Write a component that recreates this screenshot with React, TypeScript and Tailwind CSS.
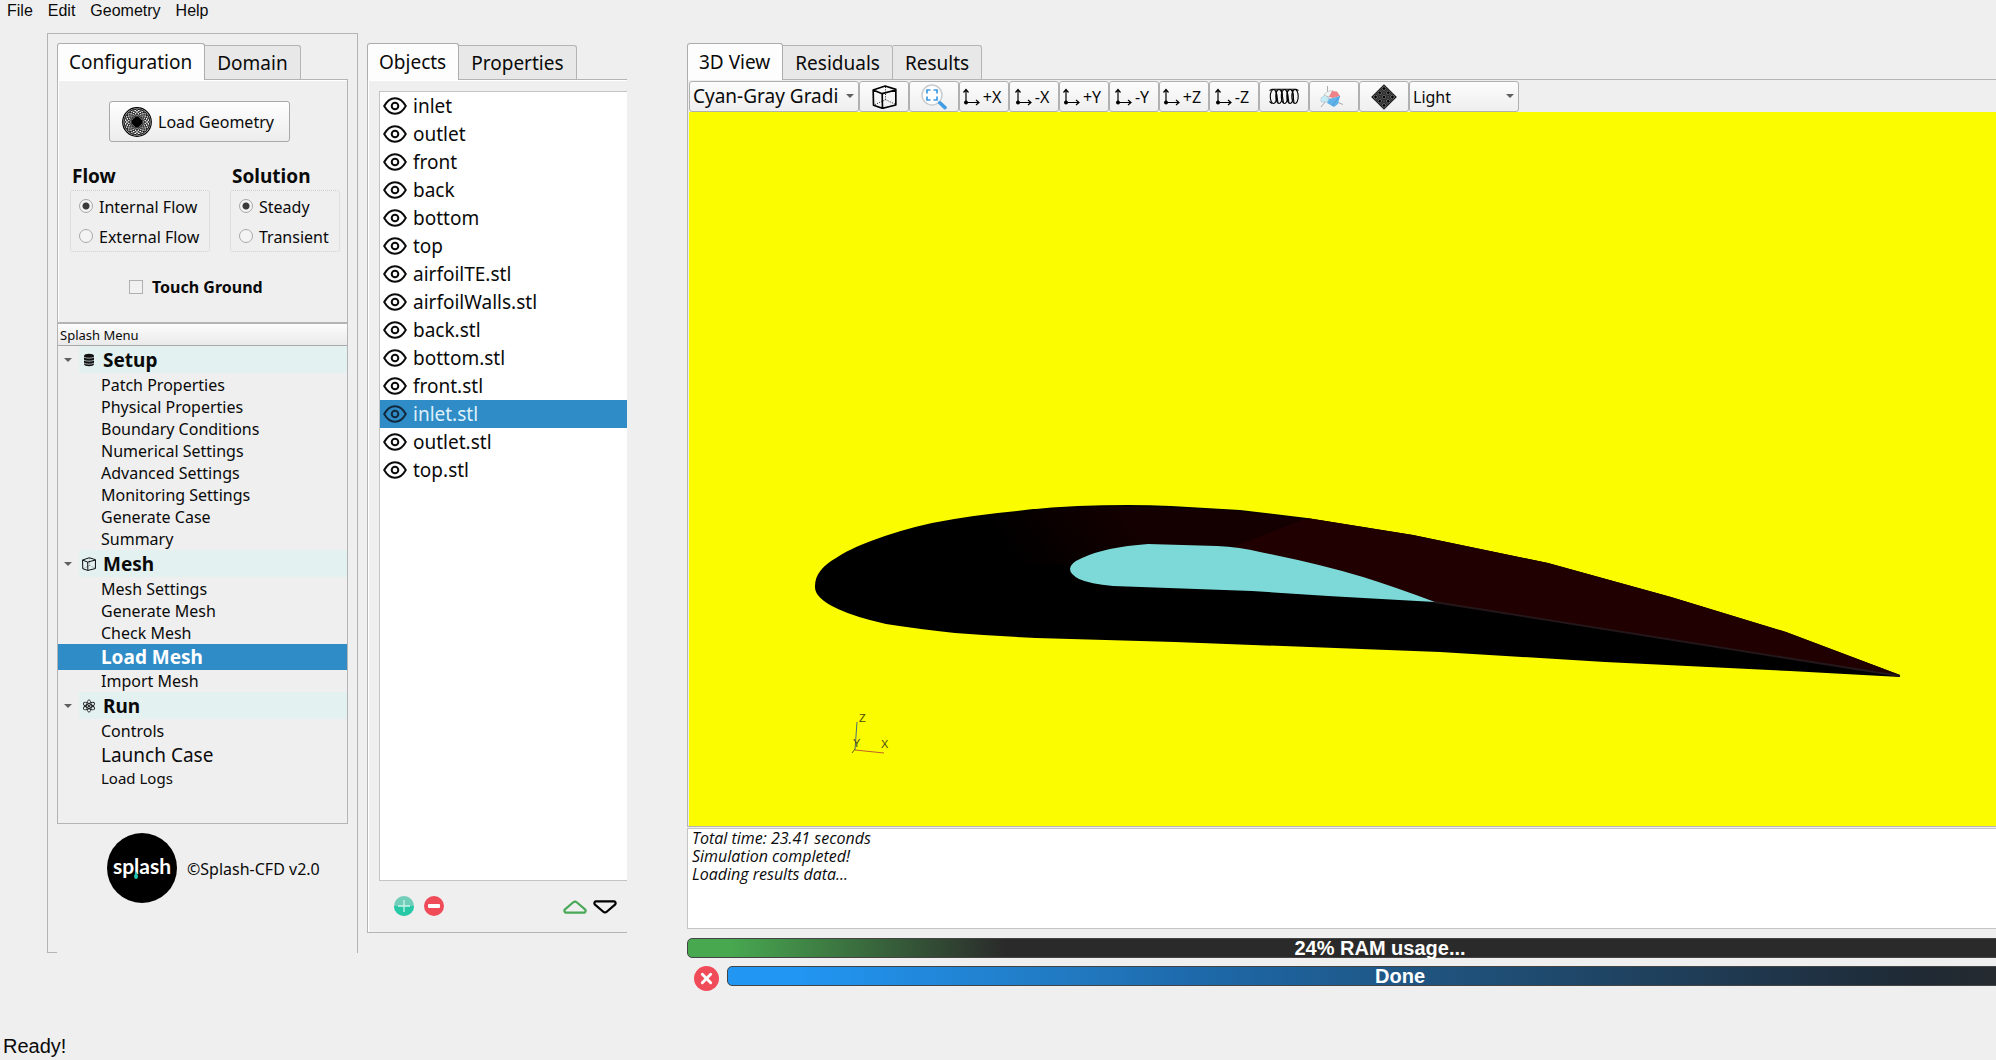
import React, { useState } from "react";

const OBJECTS = [
  "inlet", "outlet", "front", "back", "bottom", "top", "airfoilTE.stl", "airfoilWalls.stl",
  "back.stl", "bottom.stl", "front.stl", "inlet.stl", "outlet.stl", "top.stl",
];

const VIEWS = ["+X", "-X", "+Y", "-Y", "+Z", "-Z"];

function EyeIcon() {
  return (
    <svg viewBox="0 0 24 18" className="h-[18px] w-6 shrink-0" fill="none" stroke="currentColor" strokeWidth="2">
      <path d="M1.2 9C4 4 7.6 1.2 12 1.2S20 4 22.8 9C20 14 16.400 16.800 12 16.800S4 14 1.200 9Z" strokeLinejoin="round" />
      <circle cx="12" cy="9" r="3.300" />
    </svg>
  );
}

function CubeIcon({ className }: { className: string }) {
  return (
    <svg viewBox="0 0 74 72" className={className} fill="none" stroke="#000" strokeLinejoin="round">
      <path d="M3 15L39 3L71 13V60L31 70L4 61ZM3 15L30 26L71 15M30 26L31 70" strokeWidth="5" />
      <path d="M40 6V44L6 60M40 44L70 58" strokeWidth="2.500" strokeDasharray="3 4" />
    </svg>
  );
}

function GeometryIcon() {
  const turns = Array.from({ length: 20 }, (_, i) => i * 18);
  return (
    <svg viewBox="0 0 30 30" className="size-[30px] shrink-0" fill="none" stroke="#000">
      <circle cx="15" cy="15" r="14.300" fill="#fff" strokeWidth="1.200" />
      {turns.map((a) => (
        <ellipse key={a} cx="15" cy="8.300" rx="5" ry="6.500" strokeWidth="0.750" transform={`rotate(${a} 15 15)`} />
      ))}
      <circle cx="15" cy="15" r="4.500" fill="#000" />
    </svg>
  );
}

function DatabaseIcon() {
  return (
    <svg viewBox="0 0 12 14" className="h-3.5 w-3">
      <path d="M1 3C1 0 11 0 11 3V11C11 14 1 14 1 11Z" fill="#111" />
      <path d="M1 4.200C4 5.500 8 5.500 11 4.200M1 7.200C4 8.500 8 8.500 11 7.200M1 10.200C4 11.500 8 11.500 11 10.200" fill="none" stroke="#c8d4d4" strokeWidth="0.800" />
    </svg>
  );
}

function AtomIcon() {
  return (
    <svg viewBox="0 0 14 14" className="size-3.5" fill="none" stroke="#222" strokeWidth="0.900">
      {[0, 60, 120].map((a) => (
        <ellipse key={a} cx="7" cy="7" rx="2.300" ry="6.200" transform={`rotate(${a} 7 7)`} />
      ))}
      <circle cx="7" cy="7" r="0.900" fill="#222" />
    </svg>
  );
}

function AxisIcon() {
  return (
    <svg viewBox="0 0 17 18" className="h-[18px] w-[17px] shrink-0" fill="none" stroke="#000" strokeWidth="1.200">
      <path d="M3 14.500V1.500M0.500 4.500L3 1.500L5.500 4.500M3 14.500H16M13 12L16 14.500L13 17" />
      <circle cx="3" cy="14.500" r="2" fill="#000" stroke="none" />
    </svg>
  );
}

function ZoomFitIcon() {
  return (
    <svg viewBox="0 0 26 26" className="size-[26px]" fill="none">
      <circle cx="11" cy="11" r="10" fill="#fdfdfd" stroke="#c9cdd0" strokeWidth="1.500" />
      <path d="M6 9.500V6H9.500M12.500 6H16V9.500M16 12.500V16H12.500M9.500 16H6V12.500" stroke="#3d9be6" strokeWidth="1.700" />
      <path d="M18.800 18.800L24 23.600" stroke="#429de3" strokeWidth="3.600" strokeLinecap="round" />
    </svg>
  );
}

function CoilIcon() {
  return (
    <svg viewBox="0 0 30 17" className="h-[17px] w-[30px]" fill="none" stroke="#000" strokeWidth="1.100">
      {[4.5, 10, 15.5, 21, 26].map((x) => (
        <ellipse key={x} cx={x} cy="8.500" rx="3.200" ry="7" />
      ))}
      <path d="M0.500 2.500L3 1.300H27L29.500 2.500M0.500 13.500L3 15.500M7 2L9 15M12.500 2L14.500 15M18 2L20 15M23.500 2L25 15" />
    </svg>
  );
}

function ClipPlaneIcon() {
  return (
    <svg viewBox="0 0 24 22" className="h-[22px] w-6">
      <path d="M7.500 0V13L1 21M7.500 12L23 18.500" stroke="#999" strokeWidth="0.800" fill="none" />
      <path d="M1 12L5 9L9 12L7 16L1 16Z" fill="#c4ecf5" stroke="#9ab" strokeWidth="0.400" />
      <path d="M4 9L7 5.500L13 4.500L9 11Z" fill="#f1f4f5" stroke="#aaa" strokeWidth="0.500" />
      <path d="M12 5L17 5.500L20 10L13 12L9 11Z" fill="#ee8289" />
      <path d="M9 13L13 12L20 10L18 18L14 21L7 17Z" fill="#62b2ea" />
      <path d="M20 10L12 20" stroke="#3a8fd0" strokeWidth="0.600" />
    </svg>
  );
}

function MeshIcon() {
  const cells: React.ReactElement[] = [];
  for (let i = 0; i < 3; i++) for (let j = 0; j < 3; j++)
    cells.push(<circle key={`${i}${j}`} cx={6.5 + i * 5.5} cy={6.5 + j * 5.5} r="1.700" fill="#000" stroke="#8a8a8a" strokeWidth="0.700" />);
  return (
    <svg viewBox="0 0 24 24" className="size-[26px]">
      <g transform="rotate(45 12 12)">
        <rect x="3.600" y="3.600" width="16.800" height="16.800" fill="#1c1c1c" />
        <path d="M9.200 4V20M14.800 4V20M4 9.200H20M4 14.800H20" stroke="#777" strokeWidth="0.500" />
        {cells}
      </g>
    </svg>
  );
}

function Caret({ className = "" }: { className?: string }) {
  return (
    <svg viewBox="0 0 8 4" className={`h-1 w-2 ${className}`}>
      <path d="M0 0H8L4 4Z" fill="#5f6062" />
    </svg>
  );
}

function Tabs({ names }: { names: string[] }) {
  return (
    <div role="tablist" className="relative z-10 flex h-9 items-end text-[19px] leading-7">
      {names.map((n, i) =>
        i === 0 ? (
          <button key={n} role="tab" aria-selected="true" className="-mb-px h-[37px] rounded-t-[3px] border border-b-0 border-[#adadad] bg-[#fdfdfd] pr-3 pl-[11px] whitespace-nowrap">
            {n}
          </button>
        ) : (
          <button key={n} role="tab" aria-selected="false" className="h-[34px] rounded-tr-[3px] border border-b-0 border-l-0 border-[#b4b4b4] bg-[#e8e8e8] px-3 whitespace-nowrap">
            {n}
          </button>
        ),
      )}
    </div>
  );
}

function Radio({ name, label, on }: { name: string; label: string; on?: boolean }) {
  return (
    <label className="flex h-[30px] items-center gap-1.5 text-base leading-5">
      <input
        type="radio"
        name={name}
        defaultChecked={on}
        className="size-3.5 shrink-0 appearance-none rounded-full border border-[#a8a8a8] bg-[#f4f4f4] checked:bg-[radial-gradient(circle,#3a3a3a_3px,#f4f4f4_4px)]"
      />
      <span className="pt-0.5 whitespace-nowrap">{label}</span>
    </label>
  );
}

function Branch({ icon, title }: { icon: React.ReactNode; title: string }) {
  return (
    <div className="flex h-7 items-start">
      <Caret className="mt-3 ml-1.5 shrink-0" />
      <button className="ml-[7px] flex h-[27px] flex-1 items-center gap-[7px] bg-[#e3f1f1] pl-[3px] text-[19px] leading-[26px] font-bold">
        <span className="flex w-3.5 justify-center">{icon}</span>
        {title}
      </button>
    </div>
  );
}

function Leaf({ children, className = "h-[22px] text-base" }: { children: string; className?: string }) {
  return <button className={`flex w-full items-center pl-[43px] leading-5 ${className}`}>{children}</button>;
}

const toolButton =
  "flex h-[31px] w-[50px] shrink-0 items-center justify-center rounded-[3px] border border-[#b0b0b0] bg-linear-to-b from-[#fcfcfc] to-[#efefef] text-base";

function Combo({ label, value, className }: { label: string; value: string; className: string }) {
  return (
    <div className={`relative h-[31px] shrink-0 ${className}`}>
      <select aria-label={label} className="h-full w-full appearance-none rounded-[3px] border border-[#b0b0b0] bg-linear-to-b from-[#fcfcfc] to-[#efefef] pr-4 pl-[3px]">
        <option>{value}</option>
      </select>
      <Caret className="pointer-events-none absolute top-[13px] right-[5px]" />
    </div>
  );
}

function LeftPanel() {
  return (
    <section className="mb-[33px] flex w-[311px] shrink-0 flex-col border border-b-0 border-[#b4b4b4]">
      <div className="flex flex-1 flex-col px-[9px] pt-[9px]">
        <Tabs names={["Configuration", "Domain"]} />
        <div className="border border-[#b4b4b4] pt-[21px] pb-6 pl-3 shadow-[inset_1px_1px_0_#fff]">
          <button className="mr-auto ml-[39px] flex h-[41px] w-[181px] items-center gap-1.5 rounded-[3px] border border-[#a8a8a8] bg-linear-to-b from-white to-[#ececec] pl-3 text-base">
            <GeometryIcon />
            Load Geometry
          </button>
          <div className="mt-5 flex gap-5">
            <fieldset className="w-[140px] shrink-0">
              <legend className="pl-0.5 text-[19px] leading-7 font-bold">Flow</legend>
              <div className="rounded-[3px] border border-dotted border-[#cfcfcf] pl-2">
                <Radio name="flow" label="Internal Flow" on />
                <Radio name="flow" label="External Flow" />
              </div>
            </fieldset>
            <fieldset className="w-[110px] shrink-0">
              <legend className="pl-0.5 text-[19px] leading-7 font-bold">Solution</legend>
              <div className="rounded-[3px] border border-dotted border-[#cfcfcf] pl-2">
                <Radio name="solution" label="Steady" on />
                <Radio name="solution" label="Transient" />
              </div>
            </fieldset>
          </div>
          <label className="mt-6 flex items-center gap-[9px] pl-[59px] text-base leading-[22px] font-bold">
            <input type="checkbox" className="size-3.5 appearance-none border border-[#b0b0b0] bg-[#f1f1f1] checked:bg-[#555]" />
            Touch Ground
          </label>
        </div>
        <nav aria-label="Splash Menu" className="border border-[#b4b4b4] pb-[35px]">
          <h2 className="h-[22px] border-b border-[#a8a8a8] bg-linear-to-b from-[#fcfcfc] to-[#eaeaea] pl-0.5 text-[13px] leading-[22px]">Splash Menu</h2>
          <Branch icon={<DatabaseIcon />} title="Setup" />
          <Leaf>Patch Properties</Leaf>
          <Leaf>Physical Properties</Leaf>
          <Leaf>Boundary Conditions</Leaf>
          <Leaf>Numerical Settings</Leaf>
          <Leaf>Advanced Settings</Leaf>
          <Leaf>Monitoring Settings</Leaf>
          <Leaf>Generate Case</Leaf>
          <Leaf>Summary</Leaf>
          <Branch icon={<CubeIcon className="size-3.5" />} title="Mesh" />
          <Leaf>Mesh Settings</Leaf>
          <Leaf>Generate Mesh</Leaf>
          <Leaf>Check Mesh</Leaf>
          <Leaf className="h-[26px] bg-[#308cc6] text-[19px] font-bold text-white">Load Mesh</Leaf>
          <Leaf>Import Mesh</Leaf>
          <Branch icon={<AtomIcon />} title="Run" />
          <Leaf>Controls</Leaf>
          <Leaf className="h-[26px] text-[19px]">Launch Case</Leaf>
          <Leaf className="h-5 text-[15px]">Load Logs</Leaf>
        </nav>
        <div className="mt-[9px] flex items-center gap-2.5 pl-[50px]">
          <div className="relative flex size-[70px] items-center justify-center rounded-full bg-black font-['Lato'] text-[21px] leading-7 font-bold text-white">
            <span className="-mt-1">splash</span>
            <svg viewBox="0 0 4 8" className="absolute top-[38px] left-[27px] h-2 w-1"><path d="M2 0L4 5Q4 8 2 8T0 5Z" fill="#1fc3b0" /></svg>
          </div>
          <span className="pt-0.5 text-base">©Splash-CFD v2.0</span>
        </div>
      </div>
      <div className="w-[9px] border-b border-[#b4b4b4]" />
    </section>
  );
}

function ObjectsPanel() {
  const [selected, setSelected] = useState("inlet.stl");
  return (
    <section className="mt-2.5 mb-[53px] ml-[9px] flex w-[260px] shrink-0 flex-col">
      <Tabs names={["Objects", "Properties"]} />
      <div className="flex flex-1 flex-col border border-r-0 border-[#b4b4b4] pt-[11px] pl-[11px] shadow-[inset_1px_1px_0_#fff]">
        <ul className="flex-1 border border-r-0 border-[#c4c4c4] bg-white text-[19px]">
          {OBJECTS.map((o) => (
            <li key={o}>
              <button
                onClick={() => setSelected(o)}
                className={
                  o === selected
                    ? "flex h-7 w-full items-center gap-1.5 bg-[#308cc6] pl-[3px] text-[#12283c]"
                    : "flex h-7 w-full items-center gap-1.5 pl-[3px] text-[#0a0a0a]"
                }
              >
                <EyeIcon />
                <span className={o === selected ? "text-[#dff0fa]" : ""}>{o}</span>
              </button>
            </li>
          ))}
        </ul>
        <div className="flex h-[51px] items-center gap-2.5 pr-2.5 pb-0.5 pl-[15px]">
          <button aria-label="Add object">
            <svg viewBox="0 0 20 20" className="size-5">
              <circle cx="10" cy="10" r="10" fill="#6fcdb8" />
              <path d="M0 10A10 10 0 0 0 20 10Z" fill="#27c8a6" />
              <path d="M10 4V16M4 10H16" stroke="#c9f3ea" strokeWidth="1.300" />
            </svg>
          </button>
          <button aria-label="Remove object">
            <svg viewBox="0 0 20 20" className="size-5">
              <circle cx="10" cy="10" r="10" fill="#f04b59" />
              <rect x="4" y="8" width="12" height="4" rx="1" fill="#fff" />
            </svg>
          </button>
          <button aria-label="Move up" className="ml-auto">
            <svg viewBox="0 0 24 14" className="mt-0.5 h-3.5 w-6" fill="none" stroke="#4aa957" strokeWidth="2.200" strokeLinejoin="round">
              <path d="M2.500 12.600H21.500Q23.500 11 22 9.300L14 2.500Q12 .6 10 2.500L2 9.300Q.5 11 2.500 12.600Z" />
            </svg>
          </button>
          <button aria-label="Move down" className="-ml-1">
            <svg viewBox="0 0 24 14" className="mt-0.5 h-3.5 w-6" fill="none" stroke="#000" strokeWidth="2.200" strokeLinejoin="round">
              <path d="M2.500 1.400H21.500Q23.500 3 22 4.700L14 11.500Q12 13.400 10 11.500L2 4.700Q.5 3 2.500 1.400Z" />
            </svg>
          </button>
        </div>
      </div>
    </section>
  );
}

function Airfoil() {
  return (
    <svg viewBox="689 112 1307 714" preserveAspectRatio="xMinYMin slice" className="absolute inset-0 h-full w-full" role="img" aria-label="Airfoil geometry">
      <defs>
        <linearGradient id="skin" gradientUnits="userSpaceOnUse" x1="960" y1="600" x2="1110" y2="490">
          <stop offset="0.350" stopColor="#000" />
          <stop offset="1" stopColor="#140000" />
        </linearGradient>
      </defs>
      <path d="M815 586C815 575 822 566 836 558C845 552 857 546 871 541Q900 530 932 523Q973 515 1017 511Q1048 507 1078 506Q1103 505 1128 505Q1150 505 1171 506L1240 510L1307 518L1413 535L1548 563L1671 597L1786 632L1900 675V677L1790 671L1605 662L1440 652L1175 642L1036 638Q994 636 955 633Q918 629 886 624Q855 617 838 609Q814 598 815 586Z" fill="#000" />
      <path d="M871 542Q900 531 932 524Q973 516 1017 512Q1048 508 1078 507Q1150 505 1240 511L1307 519L1240 548L1147 544L1105 550L1072 565L900 565Z" fill="url(#skin)" />
      <path d="M1307 518L1413 535L1548 563L1671 597L1786 632L1900 675L1434 602L1230 548Z" fill="#200000" />
      <path d="M1434 602L1900 676" stroke="#241619" strokeWidth="2" fill="none" />
      <path d="M1070 569Q1070 563 1082 558Q1105 547 1148 544L1217 546Q1240 547 1260 552Q1320 564 1363 577Q1395 587 1435 602L1328 596L1252 591L1113 586Q1090 584 1079 579Q1070 574 1070 569Z" fill="#7cd9d8" />
      <path d="M855 750L857 722" stroke="#4a6f78" strokeWidth="1" />
      <path d="M855 750L884 753" stroke="#c0622a" strokeWidth="1" />
      <path d="M852 753L855 749" stroke="#5c5c10" strokeWidth="1" />
      <g fontSize="11" fill="#4a4a12" fontFamily="Liberation Sans, sans-serif">
        <text x="859" y="722">Z</text>
        <text x="853" y="747">Y</text>
        <text x="881" y="748">X</text>
      </g>
    </svg>
  );
}

function ViewPanel() {
  return (
    <section className="mt-2.5 -mr-[77px] ml-[60px] flex min-w-0 flex-1 flex-col">
      <Tabs names={["3D View", "Residuals", "Results"]} />
      <div className="flex flex-1 flex-col border border-[#b4b4b4] pt-px pl-px">
        <div className="flex">
          <Combo label="Background" value="Cyan-Gray Gradi" className="w-[170px] text-[19px]" />
          <button aria-label="Projection" className={toolButton}><CubeIcon className="h-6 w-[25px]" /></button>
          <button aria-label="Zoom to fit" className={toolButton}><ZoomFitIcon /></button>
          {VIEWS.map((v) => (
            <button key={v} className={`${toolButton} gap-[3px] pr-1`}>
              <AxisIcon />
              {v}
            </button>
          ))}
          <button aria-label="Wireframe" className={toolButton}><CoilIcon /></button>
          <button aria-label="Clip plane" className={`${toolButton} pr-1`}><ClipPlaneIcon /></button>
          <button aria-label="Surface mesh" className={toolButton}><MeshIcon /></button>
          <Combo label="Theme" value="Light" className="w-[110px] text-base" />
        </div>
        <div className="relative flex-1 bg-[#fcfc00]">
          <div className="absolute inset-y-0 right-[76px] left-0 overflow-hidden"><Airfoil /></div>
        </div>
      </div>
      <textarea
        readOnly
        aria-label="Log"
        className="mt-px h-[101px] resize-none border border-[#c4c4c4] bg-white px-1 font-['Open_Sans'] text-base leading-[18px] italic outline-none"
        value={"Total time: 23.41 seconds\nSimulation completed!\nLoading results data..."}
      />
      <div className="mt-[9px] h-5 rounded-[5px] border border-[#444] bg-[linear-gradient(to_right,#48a850_3%,#2a2a2a_23%)] text-center font-['Liberation_Sans'] text-xl leading-[18px] font-bold text-white">
        24% RAM usage...
      </div>
      <div className="mt-2 flex h-5 items-start">
        <button aria-label="Stop" className="ml-[7px] shrink-0">
          <svg viewBox="0 0 24 24" className="size-[25px]">
            <circle cx="12" cy="12" r="12" fill="#f04b59" />
            <path d="M8 8L16 16M16 8L8 16" stroke="#fff" strokeWidth="2.800" strokeLinecap="round" />
          </svg>
        </button>
        <div className="ml-2 h-5 flex-1 rounded-[5px] border border-[#444] bg-[linear-gradient(to_right,#2196f3_5%,#2177bd_27%,#1d69aa_35%,#1f5480_52%,#1f2a35_88%,#2a2a2a)] text-center font-['Liberation_Sans'] text-xl leading-[18px] font-bold text-white">
          Done
        </div>
      </div>
    </section>
  );
}

export default function App() {
  return (
    <div className="flex min-h-screen flex-col overflow-hidden bg-[#efefef] font-['Noto_Sans',sans-serif] text-[#0a0a0a]">
      <header className="flex h-[33px] gap-[15px] pl-[7px] font-['Liberation_Sans'] text-base leading-5">
        {["File", "Edit", "Geometry", "Help"].map((m) => (
          <button key={m} className="h-[22px]">{m}</button>
        ))}
      </header>
      <main className="flex flex-1 pb-[46px] pl-[47px]">
        <LeftPanel />
        <ObjectsPanel />
        <ViewPanel />
      </main>
      <footer className="h-7 pl-[3px] font-['Liberation_Sans'] text-xl leading-7">Ready!</footer>
    </div>
  );
}
